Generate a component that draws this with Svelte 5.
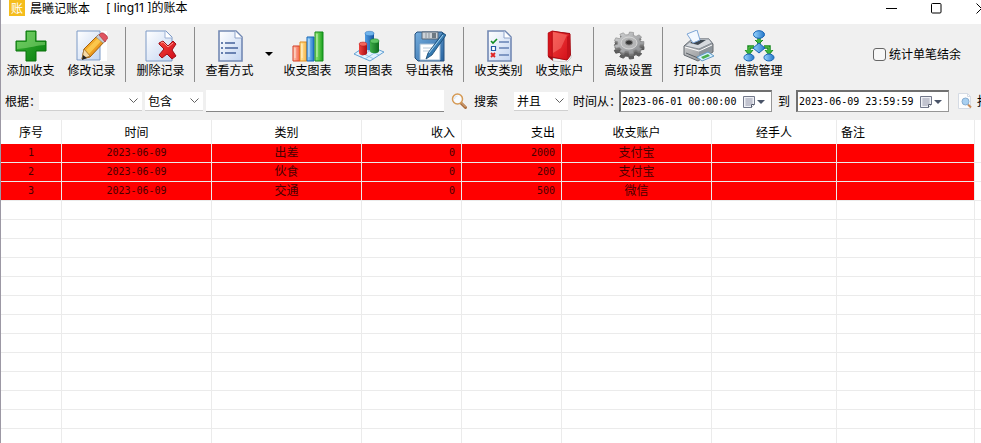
<script lang="ts">
	type Tool = { icon: string; label: string; menu?: boolean };

	const toolGroups: Tool[][] = [
		[
			{ icon: 'add', label: '添加收支' },
			{ icon: 'edit', label: '修改记录' }
		],
		[{ icon: 'delete', label: '删除记录' }],
		[
			{ icon: 'view', label: '查看方式', menu: true },
			{ icon: 'bars', label: '收支图表' },
			{ icon: 'project', label: '项目图表' },
			{ icon: 'save', label: '导出表格' }
		],
		[
			{ icon: 'category', label: '收支类别' },
			{ icon: 'book', label: '收支账户' }
		],
		[{ icon: 'gear', label: '高级设置' }],
		[
			{ icon: 'print', label: '打印本页' },
			{ icon: 'loan', label: '借款管理' }
		]
	];

	const columns = [
		{ title: '序号', width: 61, align: 'center' },
		{ title: '时间', width: 150, align: 'center' },
		{ title: '类别', width: 150, align: 'center' },
		{ title: '收入', width: 100, align: 'right' },
		{ title: '支出', width: 100, align: 'right' },
		{ title: '收支账户', width: 150, align: 'center' },
		{ title: '经手人', width: 125, align: 'center' },
		{ title: '备注', width: 138, align: 'left' }
	];

	const records = [
		['1', '2023-06-09', '出差', '0', '2000', '支付宝', '', ''],
		['2', '2023-06-09', '伙食', '0', '200', '支付宝', '', ''],
		['3', '2023-06-09', '交通', '0', '500', '微信', '', '']
	];

	const emptyRows = Array(40).fill(0);

	let field = $state('');
	let match = $state('包含');
	let logic = $state('并且');
	let keyword = $state('');
	let from = $state('2023-06-01 00:00:00');
	let to = $state('2023-06-09 23:59:59');
	let showBalance = $state(false);

	// Nine teeth, seen at an angle
	function gearPath(cy: number) {
		const points: string[] = [];
		for (let i = 0; i < 9; i++) {
			for (const [step, r] of [
				[-0.3, 0.76],
				[-0.2, 1],
				[0.2, 1],
				[0.3, 0.76]
			]) {
				const a = ((i + step) / 9) * Math.PI * 2;
				points.push(`${(16 + Math.cos(a) * 15 * r).toFixed(1)} ${(cy + Math.sin(a) * 11 * r).toFixed(1)}`);
			}
		}
		return `M${points.join('L')}z`;
	}
</script>

{#snippet page()}
	<path d="M5 1h17l6 6v24H5z" fill="url(#paper)" stroke="#7389b3" stroke-width="1.6" />
	<path d="M21 1v7h7" fill="#fff" stroke="#8ea3c9" />
{/snippet}

{#snippet toolIcon(name: string)}
	<svg class="tool-icon" viewBox="0 0 32 32" aria-hidden="true">
		{#if name === 'add'}
			<path d="M11 1h10v10h10v10H21v10H11V21H1V11h10z" fill="url(#green)" stroke="#08720b" />
			<path d="M12 2h8v10h10v3c-8 0-14 3-28 4v-7h10z" fill="#b4f29b" opacity=".4" />
		{:else if name === 'edit'}
			<path d="M1 1h30v30H1z" fill="#fff" />
			<path d="M1 1h23v29H1z" fill="url(#paper)" stroke="#7d9ac6" />
			<path d="M6 29l2-10L22 5l7 6-15 16z" fill="url(#orange)" stroke="#a3600c" />
			<path d="M10 20L23 7l3 3-13 14z" fill="#ffd65c" opacity=".7" />
			<path d="M6 29l2-10 6 7z" fill="#f7dba6" stroke="#8b6330" stroke-width=".6" />
			<path d="M6 30l1-5 4 3z" fill="#222" />
			<path d="M20 7l3-3 7 7-3 2z" fill="#c8ccd0" stroke="#777" stroke-width=".5" />
			<path d="M23 5l2-2q2-1 5 2t1 4l-2 3z" fill="#e05460" stroke="#a32b38" stroke-width=".6" />
		{:else if name === 'delete'}
			<path d="M1 1h20l6 6v24H1z" fill="url(#paper)" stroke="#7d9ac6" />
			<path d="M20 1v7h7" fill="#fff" stroke="#9db2d5" />
			<path d="M14 13l4-2 5 5 5-5 3 3-4 6 4 6-4 3-5-5-5 4-3-3 5-6-5-5z" fill="url(#red)" stroke="#9e1018" />
			<path d="M16 13l2-1 5 5 5-4" fill="none" stroke="#ff9a91" />
		{:else if name === 'view'}
			{@render page()}
			<path d="M11 13h10M11 18h13M11 23h11" stroke="#45639c" stroke-width="1.4" />
			<path d="M8 12v2M8 17v2M8 22v2" stroke="#45639c" stroke-width="1.6" />
		{:else if name === 'bars'}
			<path d="M1 16h7v15H1z" fill="url(#redBar)" stroke="#d33a24" />
			<path d="M8 12h7v19H8z" fill="url(#yellowBar)" stroke="#e28b1a" />
			<path d="M15 7h7v24h-7z" fill="url(#blueBar)" stroke="#1565b5" />
			<path d="M23 2h8v29h-8z" fill="url(#greenBar)" stroke="#128a1a" />
			<path d="M3 18v10M10 14v14M17 9v18M25 4v23" stroke="#fff" opacity=".6" />
		{:else if name === 'project'}
			<path d="M1 24l13-9 17 7-14 9z" fill="#e2f2fd" stroke="#65a2d4" />
			<path d="M5 21l16 8M10 18l16 7M7 27l14-9M12 29l14-9" stroke="#7bb1dc" stroke-width=".7" />
			<path d="M12 3v15c0 3 9 3 9 0V3z" fill="url(#blueTube)" />
			<ellipse cx="16.5" cy="3.5" rx="4.5" ry="2.200" fill="#6fb3ec" stroke="#2c6fb3" stroke-width=".5" />
			<path d="M6 14v9c0 3 8 3 8 0v-9z" fill="url(#redTube)" />
			<ellipse cx="10" cy="14" rx="4" ry="2" fill="#f2665e" stroke="#b0181c" stroke-width=".5" />
			<path d="M17 11v10c0 3 9 3 9 0V11z" fill="url(#greenTube)" />
			<ellipse cx="21.500" cy="11" rx="4.500" ry="2.200" fill="#5fc565" stroke="#157b23" stroke-width=".5" />
		{:else if name === 'save'}
			<path d="M3 2h25l2 2v27H4l-3-3V4z" fill="url(#disk)" stroke="#24517f" />
			<path d="M6 14h20v16H6z" fill="#fff" stroke="#9eb9d2" />
			<path d="M8 2h16v7H8z" fill="#cdd3d8" stroke="#596775" />
			<path d="M12 3v5M15 3v5" stroke="#8d969e" />
			<path d="M18 3h4v5h-4z" fill="#6d7982" />
			<path d="M9 18h12M9 21h9" stroke="#b7c8d7" />
			<path d="M12 29l2-6L29 3l3 2-14 20z" fill="#367bb2" stroke="#17466f" stroke-width=".8" />
			<path d="M15 23L29 5" stroke="#a9d4ef" />
		{:else if name === 'category'}
			{@render page()}
			<path d="M16 12h10M16 18h10M16 25h10" stroke="#6481b4" stroke-width="1.4" />
			<path d="M8 11l2 2 4-4" fill="none" stroke="#118d22" stroke-width="1.600" />
			<path d="M8.500 16.500h4v4h-4z" fill="#fff" stroke="#245ba8" stroke-width="1.200" />
			<path d="M8 23l4 4M12 23l-4 4" stroke="#df2423" stroke-width="1.800" />
		{:else if name === 'book'}
			<path d="M4 3l4-2 18 2 1 23-4 5-14 0-5-4z" fill="#9a0a12" />
			<path d="M9 28l14 2 4-5v3l-4 4-14-1z" fill="#f5f5f5" stroke="#aaa" stroke-width=".5" />
			<path d="M8 1l18 3v22l-3 4-15-3z" fill="url(#red)" stroke="#ad0e16" />
			<path d="M23 7l3-3v22l-3 4z" fill="#c2121a" />
			<path d="M4 3l4-2v26l-4-1z" fill="#d3151c" stroke="#ad0e16" stroke-width=".5" />
			<path d="M9 2l14 3-6 13-8 5z" fill="#ff938a" opacity=".4" />
		{:else if name === 'gear'}
			<path d={gearPath(18)} fill="#5f5f5f" stroke="#555" />
			<path d={gearPath(15)} fill="#777" />
			<path d={gearPath(13)} fill="url(#metal)" stroke="#8a8a8a" stroke-width=".6" />
			<ellipse cx="16" cy="13" rx="8" ry="6" fill="#b5b6b7" stroke="#d8d8d8" />
			<ellipse cx="16" cy="12.500" rx="3.500" ry="2.600" fill="#383838" stroke="#888" />
		{:else if name === 'print'}
			<path d="M2 16l8-7 17 0 4 5v8l-15 9-14-6z" fill="url(#metal)" stroke="#62686f" />
			<path d="M3 16l8-7 16 0 3 4-13 6z" fill="#d5d9de" stroke="#868d95" />
			<path d="M8 13l4-3 12 0-8 5z" fill="#3e4852" />
			<path d="M5 4l10-4 3 10-7 3z" fill="#f2f8ff" stroke="#7da5d5" />
			<path d="M17 19l13-6v8l-13 8z" fill="#8e959c" />
			<path d="M3 17l14 4 13-6" stroke="#fff" fill="none" />
			<path d="M4 23l12 5" stroke="#5b6167" fill="none" />
			<path d="M15 27l11-5 6 4-12 5z" fill="#d6f0ff" stroke="#629bc6" />
			<path d="M19 27l7-3 2 2-7 3z" fill="#4baf51" />
		{:else if name === 'loan'}
			<path d="M16 7v9M11 17H6v6M21 17h5v6" fill="none" stroke="#188b22" stroke-width="3.500" />
			<path d="M16 7v9M11 17H6v6M21 17h5v6" fill="none" stroke="#62cb4b" />
			<path d="M12 10l4 4 4-4M2 20l4 5 4-5M22 20l4 5 4-5" fill="#3bb63d" stroke="#188b22" />
			<ellipse cx="16" cy="4.500" rx="5.500" ry="3.800" fill="url(#blueBar)" stroke="#1562b4" />
			<path d="M16 13l6 5-6 5-6-5z" fill="url(#blueBar)" stroke="#1562b4" />
			<ellipse cx="6" cy="27.500" rx="5" ry="3.500" fill="url(#blueBar)" stroke="#1562b4" />
			<ellipse cx="26" cy="27.500" rx="5" ry="3.500" fill="url(#blueBar)" stroke="#1562b4" />
		{/if}
	</svg>
{/snippet}

{#snippet chevron()}
	<svg class="chevron" viewBox="0 0 9 6" aria-hidden="true">
		<path d="M.5.5l4 4 4-4" fill="none" stroke="#606060" />
	</svg>
{/snippet}

{#snippet calendar()}
	<svg class="calendar" viewBox="0 0 22 12" aria-hidden="true">
		<path d="M.5.5h11v8l-3 3h-8z" fill="#eef0f5" stroke="#73788a" />
		<path d="M2 3h8M2 5h8M2 7h8M2 9h6M4 2v8M6 2v8M8 2v7" stroke="#a0a5b5" stroke-width=".7" />
		<path d="M8.500 11.500v-3h3" fill="#fff" stroke="#555b6c" />
		<path d="M14 4h8l-4 4z" fill="#4a5468" />
	</svg>
{/snippet}

<svg class="defs" width="0" height="0" aria-hidden="true">
	<defs>
		<linearGradient id="paper" x2="1" y2="1"><stop stop-color="#fff" /><stop offset="1" stop-color="#c3d5f1" /></linearGradient>
		<linearGradient id="green" x2="1" y2="1"><stop stop-color="#40b838" /><stop offset="1" stop-color="#067d0e" /></linearGradient>
		<linearGradient id="red" x2="1" y2="1"><stop stop-color="#f5423c" /><stop offset="1" stop-color="#d00c18" /></linearGradient>
		<linearGradient id="orange" x2="1" y2="1"><stop stop-color="#ffc43d" /><stop offset="1" stop-color="#df7e0b" /></linearGradient>
		<linearGradient id="redBar" x2="1"><stop stop-color="#ffd0ba" /><stop offset="1" stop-color="#f35b42" /></linearGradient>
		<linearGradient id="yellowBar" x2="1"><stop stop-color="#fff1b4" /><stop offset="1" stop-color="#f7ad38" /></linearGradient>
		<linearGradient id="blueBar" x2="1"><stop stop-color="#9bd6ff" /><stop offset="1" stop-color="#2376c8" /></linearGradient>
		<linearGradient id="greenBar" x2="1"><stop stop-color="#9cee75" /><stop offset="1" stop-color="#169e1d" /></linearGradient>
		<linearGradient id="redTube" x2="1"><stop stop-color="#f0433d" /><stop offset="1" stop-color="#a80c14" /></linearGradient>
		<linearGradient id="blueTube" x2="1"><stop stop-color="#4f9ce2" /><stop offset="1" stop-color="#14529d" /></linearGradient>
		<linearGradient id="greenTube" x2="1"><stop stop-color="#3fae4a" /><stop offset="1" stop-color="#0d6b1e" /></linearGradient>
		<linearGradient id="disk" x2="1" y2="1"><stop stop-color="#76aede" /><stop offset="1" stop-color="#2965a2" /></linearGradient>
		<linearGradient id="metal" x2="1" y2="1"><stop stop-color="#d4d5d6" /><stop offset="1" stop-color="#85878a" /></linearGradient>
	</defs>
</svg>

<div class="window">
	<header class="titlebar">
		<span class="logo">账</span>
		<span>晨曦记账本</span>
		<span class="book-name">[ ling11 ]的账本</span>
		<div class="window-buttons">
			<button aria-label="最小化"><svg viewBox="0 0 11 11"><path d="M0 5.500h11" /></svg></button>
			<button aria-label="最大化"><svg viewBox="0 0 11 11"><rect x=".5" y=".5" width="9.500" height="9.500" rx="1" /></svg></button>
			<button aria-label="关闭"><svg viewBox="0 0 11 11"><path d="M.5.5l10 10M10.500.5l-10 10" /></svg></button>
		</div>
	</header>

	<nav class="toolbar">
		{#each toolGroups as group, i}
			{#if i > 0}
				<span class="separator"></span>
			{/if}
			{#each group as tool}
				<button class="tool">
					{@render toolIcon(tool.icon)}
					<span>{tool.label}</span>
				</button>
				{#if tool.menu}
					<button class="tool-menu" aria-label="{tool.label}菜单">
						<svg viewBox="0 0 8 4"><path d="M0 0h8L4 4z" /></svg>
					</button>
				{/if}
			{/each}
		{/each}
		<label class="balance">
			<input type="checkbox" bind:checked={showBalance} />
			统计单笔结余
		</label>
	</nav>

	<div class="filters">
		<label class="caption" for="field">根据：</label>
		<div class="select wide">
			<select id="field" bind:value={field}>
				<option value=""></option>
				<option>类别</option>
			</select>
			{@render chevron()}
		</div>
		<div class="select">
			<select aria-label="匹配方式" bind:value={match}>
				<option>包含</option>
				<option>等于</option>
			</select>
			{@render chevron()}
		</div>
		<input class="keyword" type="text" aria-label="关键字" bind:value={keyword} />
		<button class="search">
			<svg viewBox="0 0 16 16" aria-hidden="true">
				<path d="M10 10l4.500 4.500" stroke="#a86c3c" stroke-width="3" stroke-linecap="round" />
				<path d="M10.500 10l4 4" stroke="#e4b88b" stroke-linecap="round" />
				<circle cx="6.500" cy="6" r="5" fill="#f8fbff" stroke="#d59a55" stroke-width="1.500" />
				<path d="M3.500 6a3 3 0 0 1 3-3" fill="none" stroke="#d5e3f0" />
			</svg>
			搜索
		</button>
		<div class="select logic">
			<select aria-label="条件关系" bind:value={logic}>
				<option>并且</option>
				<option>或者</option>
			</select>
			{@render chevron()}
		</div>
		<label class="caption from" for="from">时间从：</label>
		<div class="date">
			<input id="from" type="text" bind:value={from} />
			<button aria-label="选择开始时间">{@render calendar()}</button>
		</div>
		<label class="until" for="to">到</label>
		<div class="date">
			<input id="to" type="text" bind:value={to} />
			<button aria-label="选择结束时间">{@render calendar()}</button>
		</div>
		<button class="report">
			<svg viewBox="0 0 16 16" aria-hidden="true">
				<path d="M1.500.5h9l3 3v12h-12z" fill="#fdfdfd" stroke="#d5dbe4" />
				<path d="M10.500.5v3h3" fill="none" stroke="#d5dbe4" />
				<path d="M11 11.500l3 3" stroke="#c58a58" stroke-width="2" />
				<circle cx="8.500" cy="8.500" r="3.500" fill="#a9d0f1" stroke="#86acd0" />
			</svg>
			报表
		</button>
	</div>

	<div class="grid">
		<table>
			<colgroup>
				{#each columns as column}
					<col style="width: {column.width}px" />
				{/each}
				<col />
			</colgroup>
			<thead>
				<tr>
					{#each columns as column}
						<th class={column.align}>{column.title}</th>
					{/each}
					<th></th>
				</tr>
			</thead>
			<tbody>
				{#each records as record}
					<tr class="record">
						{#each record as value, i}
							<td class={columns[i].align}>{value}</td>
						{/each}
						<td class="rest"></td>
					</tr>
				{/each}
				{#each emptyRows as _}
					<tr>
						{#each columns as _column}
							<td></td>
						{/each}
						<td class="rest"></td>
					</tr>
				{/each}
			</tbody>
		</table>
	</div>
</div>

<style>
	:global(body) {
		margin: 0;
	}

	.defs {
		position: absolute;
	}

	.window {
		display: flex;
		flex-direction: column;
		box-sizing: border-box;
		height: 100vh;
		overflow: hidden;
		border-left: 1px solid #9c98a4;
		background: #f0f0f0;
		color: #000;
		font: 12px/16px 'Noto Sans CJK SC', sans-serif;
		white-space: nowrap;
	}

	button,
	input,
	select {
		margin: 0;
		padding: 0;
		border: 0;
		border-radius: 0;
		background: none;
		color: inherit;
		font: inherit;
	}

	svg {
		display: block;
		flex: none;
	}

	.titlebar {
		display: flex;
		flex: none;
		align-items: flex-start;
		height: 24px;
		padding-left: 8px;
		background: #fff;
	}

	.logo {
		width: 16px;
		height: 16px;
		margin-right: 5px;
		background: #f5bd1c;
		color: #fff;
		font-size: 12px;
		text-align: center;
	}

	.book-name {
		margin-left: 16px;
		font-family: Inter, 'Noto Sans CJK SC', sans-serif;
	}

	.window-buttons {
		display: flex;
		margin-right: -23px;
		margin-left: auto;
	}

	.window-buttons button {
		display: grid;
		place-items: center;
		width: 45px;
		height: 16px;
	}

	.window-buttons svg {
		width: 11px;
		height: 11px;
		fill: none;
		stroke: #000;
	}

	.toolbar {
		display: flex;
		flex: none;
		align-items: center;
		height: 60px;
		margin-left: -1px;
	}

	.tool {
		display: flex;
		flex: none;
		flex-direction: column;
		align-items: center;
		width: 61px;
	}

	.tool-icon {
		width: 32px;
		height: 32px;
	}

	.tool-menu {
		width: 17px;
		height: 32px;
		padding-left: 5px;
	}

	.tool-menu svg {
		width: 8px;
		height: 4px;
	}

	.separator {
		flex: none;
		width: 1px;
		height: 55px;
		margin: 0 4px 0 3px;
		background: #8c8c8c;
	}

	.balance {
		display: flex;
		gap: 3px;
		align-items: center;
		margin-right: 20px;
		margin-left: auto;
	}

	.balance input {
		appearance: none;
		width: 13px;
		height: 13px;
		border: 1px solid #666;
		border-radius: 3px;
		background: #f7f7f7;
	}

	.balance input:checked {
		background: #0067c0;
	}

	.filters {
		display: flex;
		flex: none;
		align-items: center;
		height: 34px;
		padding-left: 4px;
	}

	/* The full-width colon leaves blank space that the next control may cover */
	.caption {
		flex: none;
		width: 34px;
	}

	.caption.from {
		width: 46px;
	}

	.select {
		display: grid;
		flex: none;
		align-items: center;
		width: 58px;
		height: 18px;
		margin-right: 3px;
		border-bottom: 1px solid #d0d0d0;
		background: #fff;
	}

	.select > :global(*) {
		grid-area: 1 / 1;
	}

	.select.wide {
		width: 103px;
	}

	.select.logic {
		width: 54px;
		margin-right: 5px;
	}

	select {
		appearance: none;
		width: 100%;
		padding-left: 3px;
		outline: none;
	}

	.chevron {
		justify-self: end;
		width: 9px;
		height: 6px;
		margin-right: 4px;
		pointer-events: none;
	}

	.keyword {
		box-sizing: border-box;
		flex: none;
		width: 238px;
		height: 22px;
		padding: 0 4px;
		border-bottom: 1px solid #868686;
		background: #fff;
		outline: none;
	}

	.search {
		display: flex;
		flex: none;
		gap: 7px;
		align-items: center;
		margin: 0 16px 0 7px;
	}

	.search svg,
	.report svg {
		width: 16px;
		height: 16px;
	}

	.date {
		display: flex;
		box-sizing: border-box;
		flex: none;
		align-items: center;
		width: 153px;
		height: 22px;
		border: 2px solid #707070;
		border-right: 1px solid #969696;
		border-bottom: 1px solid #969696;
		background: #fff;
	}

	.date input {
		flex: 1;
		min-width: 0;
		padding-left: 1px;
		outline: none;
		font: 10px/16px 'DejaVu Sans Mono', monospace;
	}

	.date button {
		padding-right: 6px;
	}

	.calendar {
		width: 22px;
		height: 12px;
	}

	.until {
		margin: 0 6px;
	}

	.report {
		display: flex;
		flex: none;
		gap: 4px;
		align-items: center;
		margin-left: 8px;
	}

	.grid {
		flex: 1;
		min-height: 0;
		margin-top: 2px;
		overflow: hidden;
		background: #fff;
	}

	table {
		width: 100%;
		border-collapse: separate;
		border-spacing: 0;
		table-layout: fixed;
	}

	th,
	td {
		box-sizing: border-box;
		padding: 0 6px 0 4px;
		border-right: 1px solid #ebebeb;
		overflow: hidden;
		text-align: left;
	}

	th {
		height: 24px;
		font-weight: normal;
	}

	td {
		height: 19px;
		border-bottom: 1px solid #ebebeb;
		font-family: 'DejaVu Sans Mono', 'Noto Sans CJK SC', monospace;
	}

	.center {
		padding: 0;
		text-align: center;
	}

	.right {
		text-align: right;
	}

	th:last-child,
	.rest {
		padding: 0;
		border-right: 0;
	}

	.record td:not(.rest) {
		background: #f00;
		color: #480000;
	}

	.record td:nth-child(1),
	.record td:nth-child(2),
	.record .right {
		font-size: 10px;
	}
</style>
